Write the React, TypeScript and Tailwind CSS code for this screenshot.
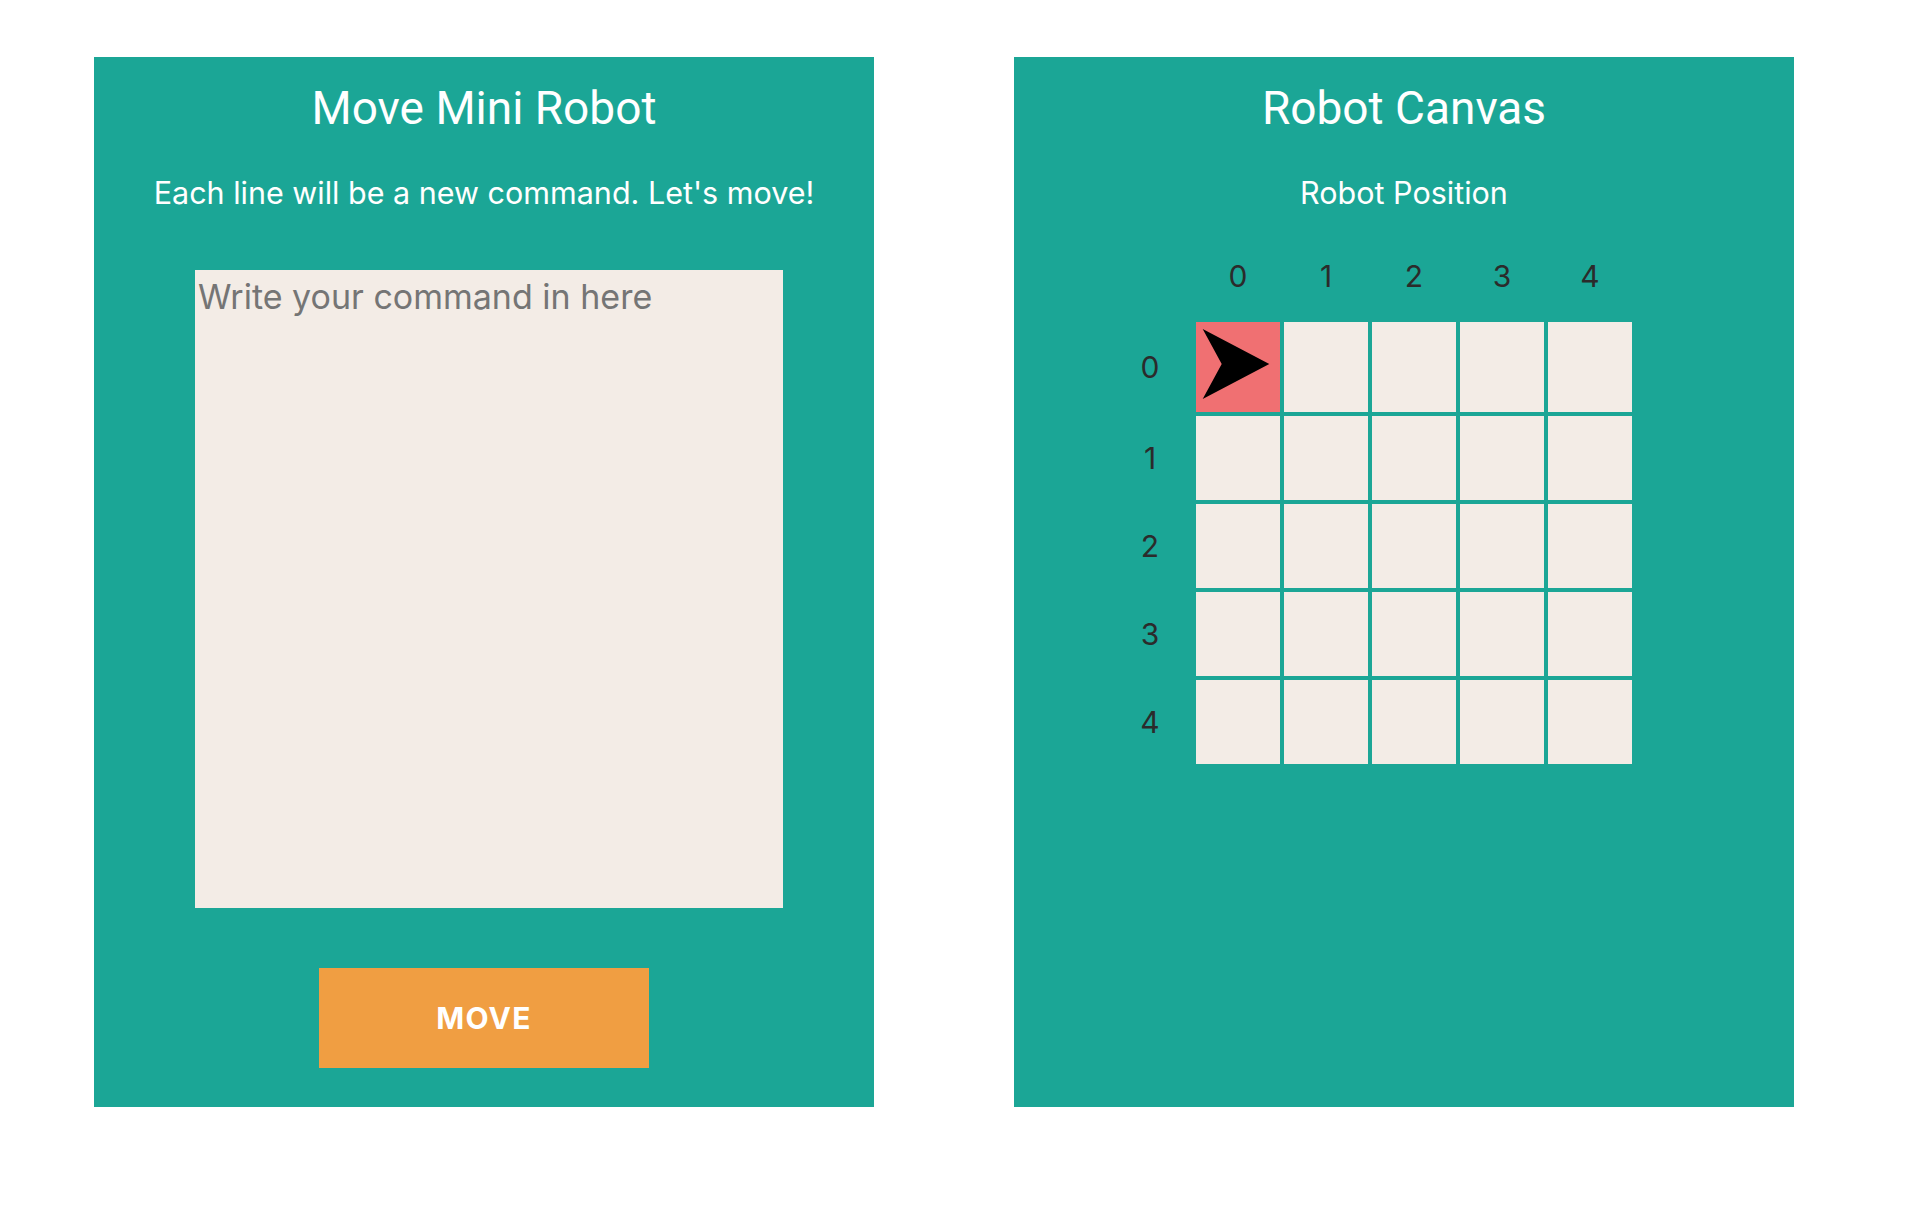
import React from "react";

const cols = [0, 1, 2, 3, 4];
const rows = [0, 1, 2, 3, 4];

function RobotArrow() {
    return (
        <svg width="84" height="90" viewBox="0 0 84 90" className="block">
            <polygon points="6.7,7 73.3,42 6.7,77 25.7,42" fill="#000" />
        </svg>
    );
}

export default function App() {
    return (
        <main
            className="min-h-screen bg-white flex items-start gap-[140px] pt-[57px] pl-[94px]"
            style={{ fontFamily: "Roboto, 'Liberation Sans', sans-serif" }}
        >
            {/* Command panel */}
            <section className="w-[780px] h-[1050px] bg-[#1ba696] flex flex-col items-center pt-[23px]">
                <h1 className="text-[46px] leading-[56px] font-normal text-white">Move Mini Robot</h1>
                <p className="mt-[39px] font-['Inter',sans-serif] text-[30.5px] leading-[36px] text-white">
                    Each line will be a new command. Let's move!
                </p>
                <textarea
                    className="mt-[59px] ml-[10px] w-[588px] h-[638px] bg-[#f3ece6] pt-[1px] px-[3px] font-['Inter',sans-serif] text-[34px] text-[#333] placeholder:text-[#757575] outline-none resize-none border-0"
                    placeholder="Write your command in here"
                />
                <button className="mt-[60px] w-[330px] h-[100px] bg-[#f09e42] text-white font-['Inter',sans-serif] font-bold text-[30px] tracking-[0.04em]">
                    MOVE
                </button>
            </section>

            {/* Canvas panel */}
            <section className="w-[780px] h-[1050px] bg-[#1ba696] flex flex-col items-center pt-[23px]">
                <h1 className="text-[46px] leading-[56px] font-normal text-white">Robot Canvas</h1>
                <p className="mt-[39px] font-['Inter',sans-serif] text-[30.5px] leading-[36px] text-white">Robot Position</p>

                <div className="self-start ml-[94px] mt-[23px] grid grid-cols-[repeat(6,84px)] gap-[4px] font-['Inter',sans-serif] text-[30px] text-[#2b2b2b]">
                    <div className="h-[84px]" />
                    {cols.map((c) => (
                        <div key={c} className="h-[84px] flex items-center justify-center">
                            {c}
                        </div>
                    ))}
                    {rows.map((r) => (
                        <React.Fragment key={r}>
                            <div className={`${r === 0 ? "h-[90px]" : "h-[84px]"} flex items-center justify-center`}>{r}</div>
                            {cols.map((c) =>
                                r === 0 && c === 0 ? (
                                    <div key={c} className="h-[90px] bg-[#f07072]">
                                        <RobotArrow />
                                    </div>
                                ) : (
                                    <div key={c} className={`${r === 0 ? "h-[90px]" : "h-[84px]"} bg-[#f3ece6]`} />
                                )
                            )}
                        </React.Fragment>
                    ))}
                </div>
            </section>
        </main>
    );
}
